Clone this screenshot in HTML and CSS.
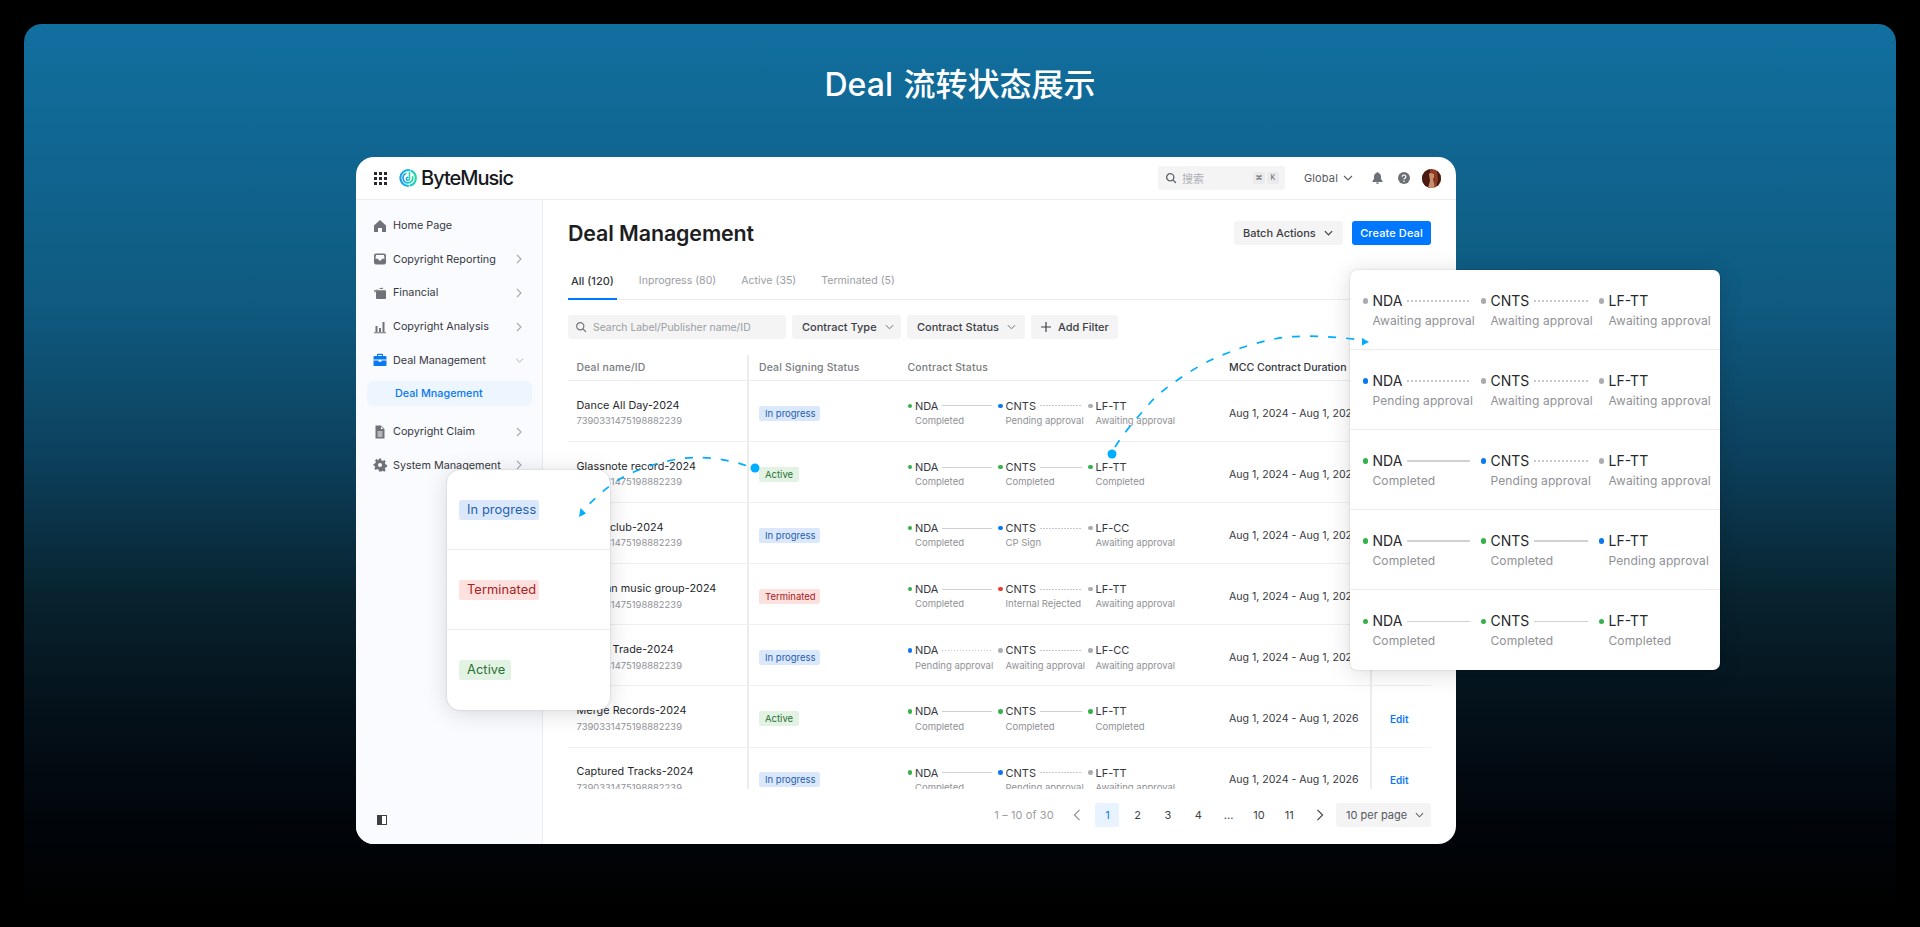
FILE: index.html
```html
<!DOCTYPE html>
<html lang="zh">
<head>
<meta charset="utf-8">
<title>Deal 流转状态展示</title>
<link rel="stylesheet" href="styles.css">
</head>
<body>
<main class="panel">
  <h1 class="headline">Deal 流转状态展示</h1>
  <section class="window">
    <header class="topbar">
      <svg class="grid-ico" viewBox="0 0 13 13"><g fill="#26282c"><rect width="3" height="3"/><rect x="5" width="3" height="3"/><rect x="10" width="3" height="3"/><rect y="5" width="3" height="3"/><rect x="5" y="5" width="3" height="3"/><rect x="10" y="5" width="3" height="3"/><rect y="10" width="3" height="3"/><rect x="5" y="10" width="3" height="3"/><rect x="10" y="10" width="3" height="3"/></g></svg>
      <svg class="logo-ico" viewBox="0 0 18 18"><defs><linearGradient id="lg" x1="0" x2="1" y1="0" y2="0"><stop offset="0" stop-color="#1f9bf0"/><stop offset=".55" stop-color="#12c8d8"/><stop offset="1" stop-color="#1fd6a4"/></linearGradient></defs><g fill="none" stroke="url(#lg)" stroke-linecap="round"><path stroke-width="2.1" d="M10.5 1.2A7.9 7.9 0 1 0 9 16.9M12.5 2a7.9 7.9 0 0 1-1 14.5"/><path stroke-width="1.7" d="M6.8 4.6A4.9 4.9 0 0 0 9 13.9a4.9 4.9 0 0 0 4.7-6"/><path stroke-width="1.5" d="M10.5 3.5v6.3a1.6 1.6 0 1 1-1.7-1.6"/></g></svg>
      <span class="brand">ByteMusic</span>
      <div class="top-search">
        <svg class="ico-s" viewBox="0 0 16 16"><circle cx="7" cy="7" r="4.8" fill="none" stroke="#62666c" stroke-width="1.8"/><path d="M10.6 10.6 14 14" stroke="#62666c" stroke-width="1.8" stroke-linecap="round"/></svg>
        <span class="top-search-text">搜索</span>
        <kbd class="key">⌘</kbd><kbd class="key">K</kbd>
      </div>
      <span class="global">Global</span>
      <svg class="chev-top" viewBox="0 0 10 6"><path d="M1 1l4 4 4-4" fill="none" stroke="#5f6368" stroke-width="1.2"/></svg>
      <svg class="bell" viewBox="0 0 12 13"><path fill="#6d7076" d="M6 0a1 1 0 0 1 1 1c2 .5 2.8 2.1 2.8 4v2.4L11.5 10v.8H.5V10l1.7-2.6V5C2.200 3.100 3 1.500 5 1a1 1 0 0 1 1-1zM4.400 11.500h3.200a1.600 1.500 0 0 1-3.200 0z"/></svg>
      <svg class="help" viewBox="0 0 12 12"><circle cx="6" cy="6" r="6" fill="#6d7076"/><path d="M4.200 4.700a1.800 1.700 0 1 1 2.700 1.500c-.6.4-.9.6-.9 1.300" fill="none" stroke="#fff" stroke-width="1.200"/><circle cx="6" cy="9.300" r=".8" fill="#fff"/></svg>
      <svg class="avatar" viewBox="0 0 19 19"><defs><clipPath id="av"><circle cx="9.500" cy="9.500" r="9.500"/></clipPath></defs><g clip-path="url(#av)"><rect width="19" height="19" fill="#7a2f1c"/><path fill="#4a1a10" d="M0 0h8v19H0zM15 0h4v19h-4z"/><path fill="#c98d6c" d="M7 5c1-2 4-2 5 0 .5 2 0 4-1 5l1 4 3 5H6l2-7z"/><path fill="#8c3d24" d="M8 1h7l1 9-2 9h-2l1-8-1-6-4-1z"/></g></svg>
    </header>
    <div class="workspace">
      <nav class="sidebar">
        <a class="nav-item"><svg class="nav-ico" viewBox="0 0 14 14"><path fill="#6f7278" d="M7 1 13 6.400V13H9V9H5v4H1V6.400z"/></svg>Home Page</a>
        <a class="nav-item"><svg class="nav-ico" viewBox="0 0 14 14"><path fill="#6f7278" fill-rule="evenodd" d="M3 1.500h8a2 2 0 0 1 2 2v7a2 2 0 0 1-2 2H3a2 2 0 0 1-2-2v-7a2 2 0 0 1 2-2zM3 3 2.400 6.800h2.600L6 8.500h2l1-1.700h2.600L11 3z"/></svg>Copyright Reporting<svg class="chev" viewBox="0 0 6 10"><path d="M1 1l4 4-4 4" fill="none" stroke="#a6a9ae" stroke-width="1.100"/></svg></a>
        <a class="nav-item"><svg class="nav-ico" viewBox="0 0 14 14"><path fill="#6f7278" d="M1 4.500 9.500 1.500l.6 1.500H3.600L1.900 7zM3 4.200h9a1 1 0 0 1 1 1V12a1 1 0 0 1-1 1H4a1 1 0 0 1-1-1z"/></svg>Financial<svg class="chev" viewBox="0 0 6 10"><path d="M1 1l4 4-4 4" fill="none" stroke="#a6a9ae" stroke-width="1.100"/></svg></a>
        <a class="nav-item"><svg class="nav-ico" viewBox="0 0 14 14"><path fill="#6f7278" d="M2.500 6h2v6h-2zM6 8h2v4H6zM9.500 2h2v10h-2zM1 12.300h12v1H1z"/></svg>Copyright Analysis<svg class="chev" viewBox="0 0 6 10"><path d="M1 1l4 4-4 4" fill="none" stroke="#a6a9ae" stroke-width="1.100"/></svg></a>
        <a class="nav-item"><svg class="nav-ico" viewBox="0 0 14 14"><path fill="#0a78f0" d="M5 .8h4a1 1 0 0 1 1 1V3h2.500A1 1 0 0 1 13.500 4v2.600H.5V4a1 1 0 0 1 1-1H4V1.800a1 1 0 0 1 1-1zM5.200 2v1h3.600V2zM.5 7.600h5v1.200h3V7.600h5V12a1 1 0 0 1-1 1h-11a1 1 0 0 1-1-1z"/></svg>Deal Management<svg class="chev chev-down" viewBox="0 0 10 6"><path d="M1 1l4 4 4-4" fill="none" stroke="#a6a9ae" stroke-width="1.100"/></svg></a>
        <a class="nav-sub">Deal Mnagement</a>
        <a class="nav-item nav-after"><svg class="nav-ico" viewBox="0 0 14 14"><path fill="#6f7278" fill-rule="evenodd" d="M2.500.5h5.500l3.500 3.500v9.500h-9zM4.500 6.500V7.500h5V6.500zM4.500 8.500V9.500h5V8.500zM4.500 10.500V11.500h5V10.500zM8 1.500V4h2.500z"/></svg>Copyright Claim<svg class="chev" viewBox="0 0 6 10"><path d="M1 1l4 4-4 4" fill="none" stroke="#a6a9ae" stroke-width="1.100"/></svg></a>
        <a class="nav-item nav-last"><svg class="nav-ico" viewBox="0 0 14 14"><path fill="#6f7278" fill-rule="evenodd" d="M6 .5h2l.4 1.800 1.300.6L11.300 2l1.400 1.400-.9 1.600.6 1.300 1.800.7v2l-1.800.4-.6 1.300.9 1.600-1.400 1.400-1.600-.9-1.300.6L8 13.500H6l-.4-1.800-1.300-.6-1.600.9-1.400-1.400.9-1.600-.6-1.300L.5 8V6l1.800-.7.6-1.300L2 2.400 3.400 1l1.600 1 1-.6zM7 5a2 2 0 1 0 0 4 2 2 0 0 0 0-4z"/></svg>System Management<svg class="chev" viewBox="0 0 6 10"><path d="M1 1l4 4-4 4" fill="none" stroke="#a6a9ae" stroke-width="1.100"/></svg></a>
        <svg class="collapse" viewBox="0 0 10 10"><rect x=".5" y=".5" width="9" height="9" fill="#fff" stroke="#3d3f44"/><rect x=".5" y=".5" width="4.500" height="9" fill="#3d3f44"/></svg>
      </nav>
      <div class="content">
        <div class="title-row">
          <h2 class="page-title">Deal Management</h2>
          <button class="btn btn-grey btn-batch">Batch Actions<svg class="chev-btn" viewBox="0 0 10 6"><path d="M1 1l4 4 4-4" fill="none" stroke="#3c3f44" stroke-width="1.300"/></svg></button>
          <button class="btn btn-blue">Create Deal</button>
        </div>
        <div class="tabs">
          <span class="tab tab-on">All (120)</span>
          <span class="tab">Inprogress (80)</span>
          <span class="tab">Active (35)</span>
          <span class="tab">Terminated (5)</span>
        </div>
        <div class="filters">
          <div class="filter-search"><svg class="ico-s" viewBox="0 0 16 16"><circle cx="7" cy="7" r="4.800" fill="none" stroke="#73767b" stroke-width="1.600"/><path d="M10.600 10.600 14 14" stroke="#73767b" stroke-width="1.600" stroke-linecap="round"/></svg>Search Label/Publisher name/ID</div>
          <button class="btn btn-grey btn-type">Contract Type<svg class="chev-btn" viewBox="0 0 10 6"><path d="M1 1l4 4 4-4" fill="none" stroke="#6a6d72" stroke-width="1.100"/></svg></button>
          <button class="btn btn-grey btn-status">Contract Status<svg class="chev-btn" viewBox="0 0 10 6"><path d="M1 1l4 4 4-4" fill="none" stroke="#6a6d72" stroke-width="1.100"/></svg></button>
          <button class="btn btn-grey btn-add"><svg class="plus" viewBox="0 0 10 10"><path d="M5 0v10M0 5h10" stroke="#3c3f44" stroke-width="1.200"/></svg>Add Filter</button>
        </div>
        <div class="table">
          <div class="row head">
            <div class="c1">Deal name/ID</div><div class="c2">Deal Signing Status</div><div class="c3">Contract Status</div><div class="c4">MCC Contract Duration</div><div class="c5"></div>
          </div>
          <div class="row">
            <div class="c1"><div class="name">Dance All Day-2024</div><div class="id">7390331475198882239</div></div>
            <div class="c2"><span class="tag t-prog">In progress</span></div>
            <div class="c3 flow">
              <div class="st"><div class="st-top"><i class="dot d-g"></i>NDA<i class="ln"></i></div><div class="st-sub">Completed</div></div>
              <div class="st"><div class="st-top"><i class="dot d-b"></i>CNTS<i class="ln ln-dot"></i></div><div class="st-sub">Pending approval</div></div>
              <div class="st"><div class="st-top"><i class="dot d-n"></i>LF-TT</div><div class="st-sub">Awaiting approval</div></div>
            </div>
            <div class="c4">Aug 1, 2024 - Aug 1, 2026</div><div class="c5"><a class="edit">Edit</a></div>
          </div>
          <div class="row">
            <div class="c1"><div class="name">Glassnote record-2024</div><div class="id">7390331475198882239</div></div>
            <div class="c2"><span class="tag t-act">Active</span></div>
            <div class="c3 flow">
              <div class="st"><div class="st-top"><i class="dot d-g"></i>NDA<i class="ln"></i></div><div class="st-sub">Completed</div></div>
              <div class="st"><div class="st-top"><i class="dot d-g"></i>CNTS<i class="ln"></i></div><div class="st-sub">Completed</div></div>
              <div class="st"><div class="st-top"><i class="dot d-g"></i>LF-TT</div><div class="st-sub">Completed</div></div>
            </div>
            <div class="c4">Aug 1, 2024 - Aug 1, 2026</div><div class="c5"><a class="edit">Edit</a></div>
          </div>
          <div class="row">
            <div class="c1"><div class="name">Sugar club-2024</div><div class="id">7390331475198882239</div></div>
            <div class="c2"><span class="tag t-prog">In progress</span></div>
            <div class="c3 flow">
              <div class="st"><div class="st-top"><i class="dot d-g"></i>NDA<i class="ln"></i></div><div class="st-sub">Completed</div></div>
              <div class="st"><div class="st-top"><i class="dot d-b"></i>CNTS<i class="ln ln-dot"></i></div><div class="st-sub">CP Sign</div></div>
              <div class="st"><div class="st-top"><i class="dot d-n"></i>LF-CC</div><div class="st-sub">Awaiting approval</div></div>
            </div>
            <div class="c4">Aug 1, 2024 - Aug 1, 2026</div><div class="c5"><a class="edit">Edit</a></div>
          </div>
          <div class="row">
            <div class="c1"><div class="name">Sichuan music group-2024</div><div class="id">7390331475198882239</div></div>
            <div class="c2"><span class="tag t-term">Terminated</span></div>
            <div class="c3 flow">
              <div class="st"><div class="st-top"><i class="dot d-g"></i>NDA<i class="ln"></i></div><div class="st-sub">Completed</div></div>
              <div class="st"><div class="st-top"><i class="dot d-r"></i>CNTS<i class="ln ln-dot"></i></div><div class="st-sub">Internal Rejected</div></div>
              <div class="st"><div class="st-top"><i class="dot d-n"></i>LF-TT</div><div class="st-sub">Awaiting approval</div></div>
            </div>
            <div class="c4">Aug 1, 2024 - Aug 1, 2026</div><div class="c5"><a class="edit">Edit</a></div>
          </div>
          <div class="row">
            <div class="c1"><div class="name">Rough Trade-2024</div><div class="id">7390331475198882239</div></div>
            <div class="c2"><span class="tag t-prog">In progress</span></div>
            <div class="c3 flow">
              <div class="st"><div class="st-top"><i class="dot d-b"></i>NDA<i class="ln ln-dot"></i></div><div class="st-sub">Pending approval</div></div>
              <div class="st"><div class="st-top"><i class="dot d-n"></i>CNTS<i class="ln ln-dot"></i></div><div class="st-sub">Awaiting approval</div></div>
              <div class="st"><div class="st-top"><i class="dot d-n"></i>LF-CC</div><div class="st-sub">Awaiting approval</div></div>
            </div>
            <div class="c4">Aug 1, 2024 - Aug 1, 2026</div><div class="c5"><a class="edit">Edit</a></div>
          </div>
          <div class="row">
            <div class="c1"><div class="name">Merge Records-2024</div><div class="id">7390331475198882239</div></div>
            <div class="c2"><span class="tag t-act">Active</span></div>
            <div class="c3 flow">
              <div class="st"><div class="st-top"><i class="dot d-g"></i>NDA<i class="ln"></i></div><div class="st-sub">Completed</div></div>
              <div class="st"><div class="st-top"><i class="dot d-g"></i>CNTS<i class="ln"></i></div><div class="st-sub">Completed</div></div>
              <div class="st"><div class="st-top"><i class="dot d-g"></i>LF-TT</div><div class="st-sub">Completed</div></div>
            </div>
            <div class="c4">Aug 1, 2024 - Aug 1, 2026</div><div class="c5"><a class="edit">Edit</a></div>
          </div>
          <div class="row">
            <div class="c1"><div class="name">Captured Tracks-2024</div><div class="id">7390331475198882239</div></div>
            <div class="c2"><span class="tag t-prog">In progress</span></div>
            <div class="c3 flow">
              <div class="st"><div class="st-top"><i class="dot d-g"></i>NDA<i class="ln"></i></div><div class="st-sub">Completed</div></div>
              <div class="st"><div class="st-top"><i class="dot d-b"></i>CNTS<i class="ln ln-dot"></i></div><div class="st-sub">Pending approval</div></div>
              <div class="st"><div class="st-top"><i class="dot d-n"></i>LF-TT</div><div class="st-sub">Awaiting approval</div></div>
            </div>
            <div class="c4">Aug 1, 2024 - Aug 1, 2026</div><div class="c5"><a class="edit">Edit</a></div>
          </div>
        </div>
        <div class="pager">
          <span class="pg-count">1 – 10 of 30</span>
          <svg class="pg-arrow pg-prev" viewBox="0 0 8 14"><path d="M7 1 1 7l6 6" fill="none" stroke="#8b8e93" stroke-width="1.300"/></svg>
          <span class="pg pg-on">1</span><span class="pg">2</span><span class="pg">3</span><span class="pg">4</span><span class="pg">...</span><span class="pg">10</span><span class="pg">11</span>
          <svg class="pg-arrow pg-next" viewBox="0 0 8 14"><path d="M1 1l6 6-6 6" fill="none" stroke="#3c3f44" stroke-width="1.300"/></svg>
          <span class="pg-size">10 per page<svg class="chev-btn" viewBox="0 0 10 6"><path d="M1 1l4 4 4-4" fill="none" stroke="#5f6368" stroke-width="1.200"/></svg></span>
        </div>
      </div>
    </div>
  </section>

  <aside class="pop pop-left">
    <div class="pop-row"><span class="ptag t-prog">In progress</span></div>
    <div class="pop-row"><span class="ptag t-term">Terminated</span></div>
    <div class="pop-row"><span class="ptag t-act">Active</span></div>
  </aside>

  <aside class="pop pop-right">
    <div class="pop-row flow-lg">
      <div class="ps"><div class="ps-top"><i class="pd d-n"></i>NDA<i class="pl pl-dot"></i></div><div class="ps-sub">Awaiting approval</div></div>
      <div class="ps"><div class="ps-top"><i class="pd d-n"></i>CNTS<i class="pl pl-dot"></i></div><div class="ps-sub">Awaiting approval</div></div>
      <div class="ps"><div class="ps-top"><i class="pd d-n"></i>LF-TT</div><div class="ps-sub">Awaiting approval</div></div>
    </div>
    <div class="pop-row flow-lg">
      <div class="ps"><div class="ps-top"><i class="pd d-b"></i>NDA<i class="pl pl-dot"></i></div><div class="ps-sub">Pending approval</div></div>
      <div class="ps"><div class="ps-top"><i class="pd d-n"></i>CNTS<i class="pl pl-dot"></i></div><div class="ps-sub">Awaiting approval</div></div>
      <div class="ps"><div class="ps-top"><i class="pd d-n"></i>LF-TT</div><div class="ps-sub">Awaiting approval</div></div>
    </div>
    <div class="pop-row flow-lg">
      <div class="ps"><div class="ps-top"><i class="pd d-g"></i>NDA<i class="pl"></i></div><div class="ps-sub">Completed</div></div>
      <div class="ps"><div class="ps-top"><i class="pd d-b"></i>CNTS<i class="pl pl-dot"></i></div><div class="ps-sub">Pending approval</div></div>
      <div class="ps"><div class="ps-top"><i class="pd d-n"></i>LF-TT</div><div class="ps-sub">Awaiting approval</div></div>
    </div>
    <div class="pop-row flow-lg">
      <div class="ps"><div class="ps-top"><i class="pd d-g"></i>NDA<i class="pl"></i></div><div class="ps-sub">Completed</div></div>
      <div class="ps"><div class="ps-top"><i class="pd d-g"></i>CNTS<i class="pl"></i></div><div class="ps-sub">Completed</div></div>
      <div class="ps"><div class="ps-top"><i class="pd d-b"></i>LF-TT</div><div class="ps-sub">Pending approval</div></div>
    </div>
    <div class="pop-row flow-lg">
      <div class="ps"><div class="ps-top"><i class="pd d-g"></i>NDA<i class="pl"></i></div><div class="ps-sub">Completed</div></div>
      <div class="ps"><div class="ps-top"><i class="pd d-g"></i>CNTS<i class="pl"></i></div><div class="ps-sub">Completed</div></div>
      <div class="ps"><div class="ps-top"><i class="pd d-g"></i>LF-TT</div><div class="ps-sub">Completed</div></div>
    </div>
  </aside>

  <svg class="arrows" viewBox="0 0 1920 927">
    <g fill="none" stroke="#00aeff" stroke-width="1.700" stroke-dasharray="8 10">
      <path d="M746 465.500C730 460 712 457.500 697 457.500S660 461 636 471S600 494 583 510"/>
      <path d="M1115 447C1127 428 1140 415 1150 403S1190 370 1211 360S1265 339 1288 337S1340 337 1360 340"/>
    </g>
    <g fill="#00aeff">
      <circle cx="755" cy="468" r="4.500"/>
      <circle cx="1112" cy="454" r="4.500"/>
      <path d="M579 517 580.500 508 586 513.500z"/>
      <path d="M1369 342 1362 338 1362 345.500z"/>
    </g>
  </svg>
</main>
</body>
</html>
```

FILE: styles.css
```css
* { box-sizing: border-box; }
html, body { margin: 0; height: 927px; overflow: hidden; background: #000; }
body { font-family: Inter, "Noto Sans CJK SC", sans-serif; color: #26282c; }
i { display: block; font-style: normal; }

.panel {
  position: relative;
  width: 1872px;
  height: 880px;
  margin: 24px 24px 0;
  padding-top: 39px;
  border-radius: 18px 18px 0 0;
  background: linear-gradient(180deg, #116f9f 0%, #0f5a80 32%, #0c3f5b 50%, #08232f 65%, #04111a 78%, #01050a 91%, #000 100%);
}
.headline {
  margin: 0;
  height: 94px;
  text-align: center;
  color: #fff;
  font-family: Inter, "Noto Sans CJK SC", sans-serif;
  font-size: 32px;
  line-height: 44px;
  font-weight: 500;
  word-spacing: 2px;
}

.window {
  width: 1100px;
  height: 687px;
  margin-left: 332px;
  background: #fff;
  border-radius: 18px;
  overflow: hidden;
  display: flex;
  flex-direction: column;
}

.topbar {
  height: 43px;
  flex: none;
  display: flex;
  align-items: center;
  padding-left: 18px;
  border-bottom: 1px solid #ececee;
}
.grid-ico { width: 13px; height: 13px; margin-right: 12px; }
.logo-ico { width: 18px; height: 18px; margin-right: 4px; }
.brand { font-size: 20px; font-weight: 500; letter-spacing: -1px; color: #16181c; }
.top-search {
  width: 127px; height: 24px; margin-left: auto;
  display: flex; align-items: center;
  padding: 0 6px 0 7px; border-radius: 3px; background: #f4f4f5;
}
.ico-s { width: 12px; height: 12px; flex: none; }
.top-search-text { margin-left: 5px; margin-right: auto; font-size: 11px; color: #aeb0b4; }
.key {
  width: 12px; height: 12px; margin-left: 2px; border-radius: 2px;
  background: #ebebed; color: #5c5f64;
  font-family: Inter, "DejaVu Sans", sans-serif; font-size: 7px; line-height: 12px; text-align: center;
}
.global { margin-left: 19px; font-size: 11px; letter-spacing: .15px; color: #55585d; }
.chev-top { width: 10px; height: 6px; margin-left: 5px; }
.bell { width: 11px; height: 12px; margin-left: 19px; }
.help { width: 12px; height: 12px; margin-left: 15px; }
.avatar { width: 19px; height: 19px; margin-left: 12px; margin-right: 15px; }

.workspace { flex: 1; display: flex; min-height: 0; }

.sidebar {
  width: 187px; flex: none;
  position: relative;
  background: #fafbff;
  border-right: 1px solid #ececf0;
  padding: 9px 10px 0 17px;
}
.nav-item {
  height: 33.600px;
  display: flex; align-items: center;
  font-size: 10.800px; color: #36393e;
}
.nav-ico { width: 14px; height: 14px; margin-right: 6px; flex: none; }
.chev { width: 6px; height: 10px; margin-left: auto; margin-right: 10px; flex: none; }
.chev-down { width: 9px; height: 5px; margin-right: 8px; }
.nav-sub {
  display: block; height: 25px; margin: 4px 0 0 -6px; width: 165px;
  padding-left: 28px;
  background: #edf5ff; border-radius: 6px;
  font-size: 10.800px; line-height: 25px; font-weight: 500; color: #0a78f0;
}
.nav-after { margin-top: 9px; }
.collapse { position: absolute; left: 21px; bottom: 19px; width: 10px; height: 10px; }

.content { flex: 1; min-width: 0; padding: 0 25px; display: flex; flex-direction: column; }

.title-row { height: 66px; flex: none; display: flex; align-items: center; gap: 9px; }
.page-title { margin: 0 auto 0 0; font-size: 21.400px; font-weight: 600; letter-spacing: -.1px; color: #1c1e22; }
.btn {
  height: 24px; border: 0; border-radius: 3px;
  font-family: inherit; font-size: 11px; font-weight: 500;
  display: inline-flex; align-items: center; padding: 0; white-space: nowrap;
}
.btn-grey { background: #f4f4f5; color: #3c3f44; }
.btn-blue { background: #0077ff; color: #fff; width: 79px; justify-content: center; letter-spacing: .1px; }
.btn-batch { width: 109px; padding-left: 9px; }
.chev-btn { width: 9px; height: 6px; flex: none; margin-left: 8px; }

.tabs { height: 34px; flex: none; display: flex; gap: 19px; align-items: flex-start; border-bottom: 1px solid #ececee; padding-top: 8px; }
.tab { height: 26px; padding: 0 3px; font-size: 10.600px; color: #9b9da2; line-height: 14px; }
.tab-on { font-size: 11px; color: #36393e; font-weight: 500; border-bottom: 2px solid #0077ff; }

.filters { height: 24px; flex: none; margin-top: 15px; display: flex; gap: 6px; }
.filter-search {
  width: 218px; height: 24px; background: #f4f4f5; border-radius: 3px;
  display: flex; align-items: center; gap: 6px; padding-left: 7px;
  font-size: 10.400px; color: #9b9da2;
}
.btn-type { width: 109px; padding-left: 10px; }
.btn-status { width: 118px; padding-left: 10px; }
.btn-add { width: 87px; padding-left: 10px; }
.plus { width: 10px; height: 10px; margin-right: 7px; }

.table { height: 434px; flex: none; margin-top: 16px; overflow: hidden; }
.row {
  display: grid;
  grid-template-columns: 181px 158.500px 321.500px 141px 61px;
  height: 61.100px;
  border-bottom: 1px solid #f0f0f2;
}
.row:not(.head) > div { padding-top: 4px; }
.row.head { height: 26px; border-bottom: 1.500px solid #ececee; font-size: 10.400px; font-weight: 500; color: #797c81; letter-spacing: .2px; }
.row > div { display: flex; flex-direction: column; justify-content: center; min-width: 0; white-space: nowrap; }
.head > div { justify-content: flex-start; padding-top: 6px; line-height: 13px; }
.c1 { padding-left: 8.500px; border-right: 2px solid #ececee; }
.row > .c2 { padding-left: 10px; align-items: flex-start; }
.row > .c3.flow { display: grid; grid-template-columns: 90.500px 90px 1fr; align-items: center; align-content: center; }
.c4 { font-size: 10.600px; letter-spacing: -.02px; color: #36393e; }
.row > .c5 { border-left: 2px solid #ececee; padding-left: 18px; }
.head > .c5 { border-left: 0; }

.name { font-size: 10.800px; line-height: 14px; letter-spacing: .05px; color: #26282c; font-weight: 400; }
.id { font-size: 9.400px; line-height: 13px; letter-spacing: .02px; color: #8f9196; margin-top: 1.400px; }
.tag { height: 15px; padding: 0 6px; border-radius: 2px; font-size: 9.500px; line-height: 15px; }
.t-prog { background: #dbe8fc; color: #1d5fae; width: 61px; }
.t-act { background: #e3f3e3; color: #2a7034; width: 40px; }
.t-term { background: #fde1df; color: #a8201c; width: 61px; }
.edit { font-size: 10px; font-weight: 600; color: #0a78f0; }

.st { min-width: 0; }
.st-top { display: flex; align-items: center; font-size: 11px; line-height: 14px; color: #36393e; }
.dot { width: 4.500px; height: 4.500px; border-radius: 50%; margin-right: 3px; flex: none; }
.d-g { background: #33b24a; }
.d-b { background: #0a78f0; }
.d-n { background: #aaacb0; }
.d-r { background: #f0392e; }
.ln { flex: 1; height: 1px; background: #cfd0d3; margin: 0 6px 0 4px; }
.ln-dot { background: repeating-linear-gradient(90deg, #c6c8cc 0 1.500px, transparent 1.500px 3px); }
.st-sub { margin: 1.200px 0 0 7.500px; font-size: 9.500px; line-height: 13px; color: #8f9196; white-space: nowrap; }

.pager {
  flex: 1; display: flex; align-items: center; justify-content: flex-end;
  padding-bottom: 3px; font-size: 11px; color: #3c3f44;
}
.pg-count { color: #9b9da2; margin-right: 19px; letter-spacing: .1px; }
.pg-arrow { width: 8px; height: 12px; flex: none; }
.pg-prev { margin-right: 14.700px; }
.pg-next { margin: 0 12px 0 8.500px; }
.pg { width: 24px; height: 24px; margin-right: 6.300px; text-align: center; line-height: 24px; border-radius: 2px; }
.pg-on { background: #e8f3ff; color: #0a78f0; }
.pg-size { width: 95px; height: 24px; padding-left: 10px; display: flex; align-items: center; background: #f4f4f5; border-radius: 3px; color: #55585d; }

.pop {
  position: absolute;
  background: #fff;
  box-shadow: 0 3px 24px rgba(0,0,0,.14), 0 0 2px rgba(0,0,0,.2);
  display: flex; flex-direction: column;
  overflow: hidden;
}
.pop-left { left: 423px; top: 446px; width: 163px; height: 240px; border-radius: 13px; }
.pop-right { left: 1326px; top: 246px; width: 370px; height: 400px; border-radius: 7px; }
.pop-row { height: 80px; flex: none; display: flex; align-items: center; padding-left: 12px; border-bottom: 1px solid #ececee; }
.pop-row:last-child { border-bottom: 0; }
.ptag { height: 20px; padding: 0 8px; border-radius: 2.500px; font-size: 12.800px; line-height: 20px; letter-spacing: .1px; white-space: nowrap; }
.ptag.t-prog, .ptag.t-term { width: 80px; }
.ptag.t-act { width: 52px; }

.flow-lg { display: grid; grid-template-columns: 118px 118px 1fr; padding: 2.500px 0 0 12.500px; align-items: center; }
.ps-top { display: flex; align-items: center; font-size: 14px; line-height: 18px; color: #26282c; }
.pd { width: 5.500px; height: 5.500px; border-radius: 50%; margin-right: 4.500px; flex: none; }
.pl { flex: 1; height: 1.500px; background: #d0d1d4; margin: 0 11px 0 5px; }
.pl-dot { background: repeating-linear-gradient(90deg, #c6c8cc 0 2px, transparent 2px 4px); }
.ps-sub { margin: 2px 0 0 10px; font-size: 12px; line-height: 18px; letter-spacing: .1px; color: #8f9196; white-space: nowrap; }

.arrows { position: absolute; left: -24px; top: -24px; width: 1920px; height: 927px; pointer-events: none; }
```
